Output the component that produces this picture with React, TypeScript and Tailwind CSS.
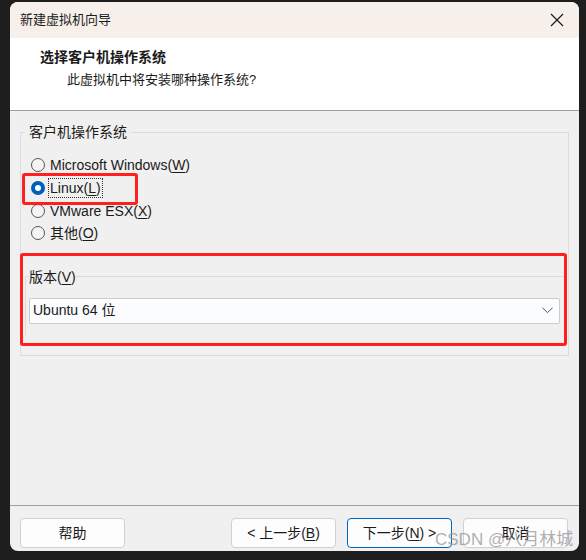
const ui = { fontFamily: '"Liberation Sans", "Noto Sans CJK SC", sans-serif' };

const Radio = ({ label, hot, checked, focus }: { label: string; hot: string; checked?: boolean; focus?: boolean }) => (
  <div className="flex items-center h-[22.7px]">
    {checked ? (
      <span className="w-[14px] h-[14px] rounded-full bg-[#005fb8] flex items-center justify-center">
        <span className="w-[6px] h-[6px] rounded-full bg-white" />
      </span>
    ) : (
      <span className="w-[14px] h-[14px] rounded-full border border-[#555] bg-[#f5f5f5]" />
    )}
    <span className={"ml-[4px] text-[14px] leading-[18px] text-[#1a1a1a] px-[1px] " + (focus ? "outline outline-1 outline-dotted outline-[#333]" : "")}>
      {label}(<span className="underline underline-offset-2">{hot}</span>)
    </span>
  </div>
);

const Btn = ({ children, primary }: { children: React.ReactNode; primary?: boolean }) => (
  <button
    className={
      "w-[105px] h-[30px] rounded-[4px] bg-[#fdfdfd] text-[14px] text-[#1a1a1a] flex items-center justify-center " +
      (primary ? "border border-[#0067c0]" : "border border-[#d0d0d0]")
    }
  >
    {children}
  </button>
);

export default function App() {
  return (
    <div className="min-h-screen bg-[#1e1e1e] pl-[10px] pt-[2px]" style={ui}>
      <div className="relative w-[569px] h-[549px] rounded-[8px] bg-[#f0f0f0] flex flex-col overflow-hidden">
        {/* title bar */}
        <div className="h-[36px] bg-[#f7f0ea] flex items-center justify-between pl-[10px] pr-[14px]">
          <span className="text-[13px] text-[#1a1a1a]">新建虚拟机向导</span>
          <svg width="14" height="14" viewBox="0 0 14 14" className="mr-[1px]">
            <path d="M1 1 L13 13 M13 1 L1 13" stroke="#1a1a1a" strokeWidth="1.2" />
          </svg>
        </div>

        {/* header */}
        <div className="h-[73px] bg-white border-b border-[#a0a0a0] pl-[30px] pt-[10px]">
          <div className="text-[14px] font-bold text-[#1a1a1a] leading-[18px]">选择客户机操作系统</div>
          <div className="text-[13px] text-[#1a1a1a] leading-[18px] mt-[5px] pl-[27px]">此虚拟机中将安装哪种操作系统?</div>
        </div>

        {/* content */}
        <div className="flex-1 px-[10px] pt-[12px]">
          <fieldset className="border border-[#dcdcdc] h-[233px] pl-0 pr-[2px]">
            <legend className="text-[14px] text-[#1a1a1a] ml-[4px] px-[4px] leading-[18px]">客户机操作系统</legend>
            <div className="mt-[13px] pl-[10px] flex flex-col">
              <Radio label="Microsoft Windows" hot="W" />
              <Radio label="Linux" hot="L" checked focus />
              <Radio label="VMware ESX" hot="X" />
              <Radio label="其他" hot="O" />
            </div>
            <fieldset className="mt-[23px] ml-[4px] border-t border-l border-[#dcdcdc] pl-[3px] pr-[6px] pb-[12px]">
              <legend className="text-[14px] text-[#1a1a1a] leading-[18px] px-0">
                版本(<span className="underline underline-offset-2">V</span>)
              </legend>
              <div className="mt-[12px] h-[26px] bg-[#fbfcfe] border border-[#c8cdd3] rounded-[2px] flex items-center justify-between pl-[3px] pr-[6px]">
                <span className="text-[14px] text-[#1a1a1a]">Ubuntu 64 位</span>
                <svg width="11" height="7" viewBox="0 0 11 7">
                  <path d="M0.5 0.8 L5.5 5.6 L10.5 0.8" stroke="#555" strokeWidth="1" fill="none" />
                </svg>
              </div>
            </fieldset>
          </fieldset>
        </div>

        {/* footer */}
        <div className="h-[46px] border-t border-[#a0a0a0] flex items-start pt-[12px] pl-[10px] pr-[11px]">
          <Btn>帮助</Btn>
          <div className="flex-1" />
          <div className="flex gap-[11px]">
            <Btn>&lt; 上一步(<span className="underline underline-offset-2">B</span>)</Btn>
            <Btn primary>下一步(<span className="underline underline-offset-2">N</span>) &gt;</Btn>
            <Btn>取消</Btn>
          </div>
        </div>

        {/* red annotations */}
        <div className="absolute left-[12px] top-[171px] w-[116px] h-[32px] border-[3px] border-[#ff1f1f] rounded-[3px]" />
        <div className="absolute left-[10px] top-[251px] w-[547px] h-[93px] border-[3px] border-[#ff1f1f] rounded-[3px]" />

        {/* watermark */}
        <div className="absolute left-[425px] top-[529px] text-[17px] text-[#9a9a9a]/80 leading-[18px]">CSDN @八月林城</div>
      </div>
    </div>
  );
}
